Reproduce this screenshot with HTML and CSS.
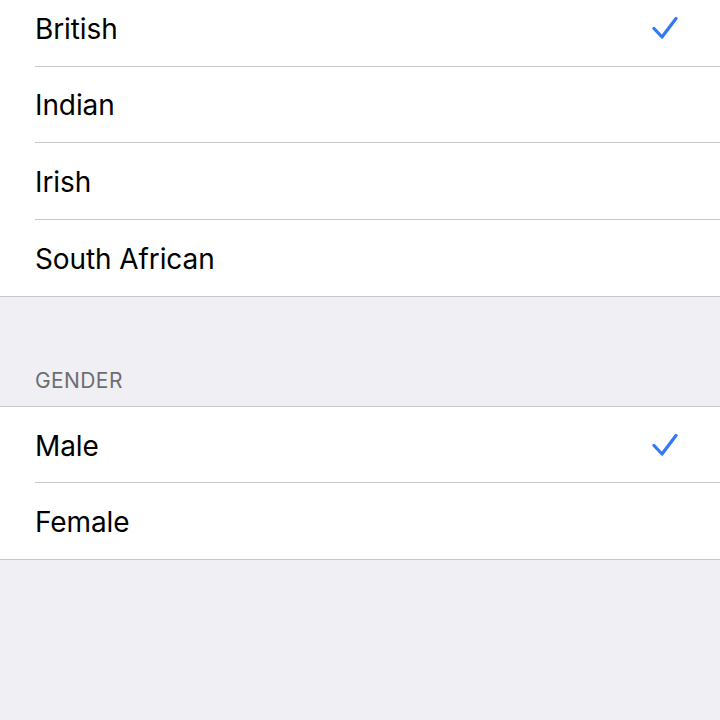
FILE: index.html
```html
<!DOCTYPE html>
<html lang="en">
<head>
    <meta charset="UTF-8">
    <meta name="viewport" content="width=device-width, initial-scale=1.0">
    <title>Voice Settings</title>
    <link rel="stylesheet" href="styles.css">
</head>
<body>
    <div class="group group-first">
        <div class="row">
            <div class="row-inner">
                <span class="label">British</span>
                <svg class="check" viewBox="0 0 26 26" width="26" height="26"><path d="M2 12.5 L10 21 L24 2.5"/></svg>
            </div>
        </div>
        <div class="row"><div class="row-inner"><span class="label">Indian</span></div></div>
        <div class="row"><div class="row-inner"><span class="label">Irish</span></div></div>
        <div class="row"><div class="row-inner"><span class="label">South African</span></div></div>
    </div>

    <div class="section-header">GENDER</div>

    <div class="group group-gender">
        <div class="row">
            <div class="row-inner">
                <span class="label">Male</span>
                <svg class="check" viewBox="0 0 26 26" width="26" height="26"><path d="M2 12.5 L10 21 L24 2.5"/></svg>
            </div>
        </div>
        <div class="row"><div class="row-inner"><span class="label">Female</span></div></div>
    </div>
</body>
</html>
```

FILE: styles.css
```css
* {
    margin: 0;
    padding: 0;
    box-sizing: border-box;
}

body {
    width: 720px;
    height: 720px;
    overflow: hidden;
    background: #efeff4;
    font-family: Inter, "Noto Sans", sans-serif;
    color: #000;
}

.group {
    background: #fff;
    border-top: 1px solid #c8c7cc;
    border-bottom: 1px solid #c8c7cc;
}

/* list is scrolled a bit, first row is cut */
.group-first {
    margin-top: -10px;
    border-top: none;
}

.row {
    padding-left: 35px;
}

.row-inner {
    height: 76.5px;
    display: flex;
    align-items: center;
    justify-content: space-between;
    padding-right: 42px;
    border-bottom: 1px solid #c8c7cc;
}

.group-gender .row-inner {
    height: 76px;
}

.row:last-child .row-inner {
    border-bottom: none;
}

.label {
    font-size: 28px;
    letter-spacing: -0.1px;
    padding-top: 2px;
}

.check {
    fill: none;
    stroke: #3478f6;
    stroke-width: 3.2;
    stroke-linecap: round;
    stroke-linejoin: round;
    margin-top: 2px;
}

.section-header {
    height: 109px;
    display: flex;
    align-items: flex-end;
    padding: 0 35px 13px;
    font-size: 21px;
    color: #6d6d72;
    letter-spacing: 0.4px;
}
```
